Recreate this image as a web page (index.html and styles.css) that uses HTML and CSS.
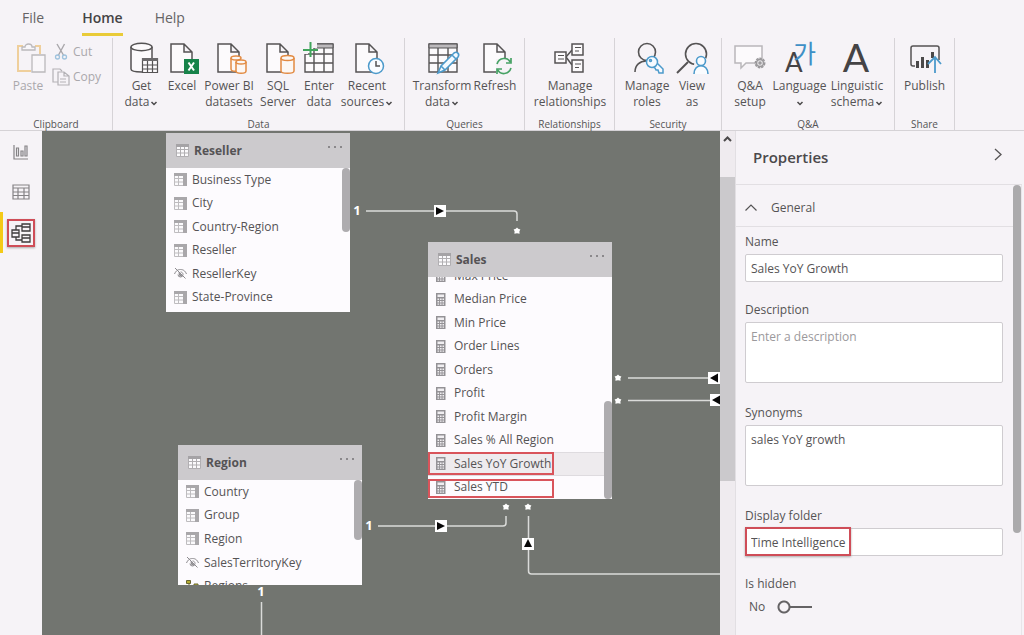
FILE: index.html
```html
<!DOCTYPE html>
<html lang="en">
<head>
<meta charset="utf-8">
<title>Model view</title>
<link rel="stylesheet" href="styles.css">
</head>
<body>
<svg class="symbols" aria-hidden="true">
  <symbol id="table" viewBox="0 0 13 13"><path fill="#fbfafc" stroke="#b1afb2" d="M.5 .5h12v12h-12zM.5 5.500h12M.5 9h12M4.500 3v9.500M8.500 3v9.500"/><path fill="#a5a3a6" d="M0 0h13v3H0z"/></symbol>
  <symbol id="column" viewBox="0 0 13 13"><path fill="#fbfafc" stroke="#bebcbf" d="M.5 .5h12v12h-12zM.5 5.500h9M.5 9h9M4.500 3v9.500"/><path fill="#a9a7aa" d="M0 0h13v3H0zM9 3h4v10H9z"/></symbol>
  <symbol id="calc" viewBox="0 0 13 13"><path fill="#949296" d="M0 0h9.500v13H0z"/><path fill="#f0eef1" d="M1.500 1.500h6.500v2.500H1.500zM1.500 5.500h1.600v1.500H1.500zM4 5.500h1.600v1.500H4zM6.500 5.500H8v1.500H6.500zM1.500 8h1.600v1.500H1.500zM4 8h1.600v1.500H4zM6.500 8H8v1.500H6.500zM1.500 10.400h1.600v1.300H1.500zM4 10.400h1.600v1.300H4zM6.500 10.400H8v1.300H6.500z"/></symbol>
  <symbol id="hidden" viewBox="0 0 13 13"><g fill="none" stroke="#8d8b8f"><path d="M.5 7C2 3.500 4 2.500 6.500 2.500S11 3.500 12.500 7M1 1l10.500 10.500M4 7.500a2.500 2.500 0 0 0 5 0c0-1.500-1-2.500-2.500-2.500"/></g><path fill="#8d8b8f" d="M4.500 5l4 4c-2 1.500-4 0-4-4z"/></symbol>
  <symbol id="page" viewBox="0 0 32 32"><path fill="#fcfafc" stroke="#555354" stroke-width="1.500" d="M5 2h13l8 8v20H5zM18 2v8h8"/></symbol>
  <symbol id="down" viewBox="0 0 8 6"><path fill="none" stroke="#4b494a" stroke-width="1.500" d="M1.500 2L4 4.500 6.500 2"/></symbol>
  <symbol id="star" viewBox="-4 -4 8 8"><path fill="#fff" d="M0-3.500l1.200 1.300 2.200.6-1 1.900.2 2.500L0 2.300l-2.600.5.2-2.500-1-1.900 2.200-.6z"/></symbol>
</svg>
<div class="app">
  <header class="top">
    <nav class="tabs">
      <a href="#file" class="tab">File</a>
      <a href="#home" class="tab tab-active">Home</a>
      <a href="#help" class="tab">Help</a>
    </nav>
    <div class="ribbon">
      <section class="group g-clipboard">
        <div class="tools">
          <button class="tool dim"><svg class="icon" viewBox="0 0 32 32"><path fill="none" stroke="#efcf9c" stroke-width="2" d="M11 4H6v25h13M23 4h5v8"/><path fill="#f9f7fa" stroke="#bbb9bc" stroke-width="1.300" d="M10 8V5h3c0-4 7-4 7 0h3v3zM20 13h13v17H20z"/></svg><span>Paste</span></button>
          <div class="small-tools">
            <button class="small dim"><svg width="18" height="18" viewBox="0 0 18 18" fill="none"><path stroke="#a9a7ab" stroke-width="1.400" d="M5 1l7 12M12.500 1L6 13"/><g stroke="#9fc3de" stroke-width="1.300"><circle cx="5.500" cy="14" r="2"/><circle cx="12.500" cy="14" r="2"/></g></svg><span>Cut</span></button>
            <button class="small dim"><svg width="18" height="18" viewBox="0 0 18 18" fill="none" stroke="#b3b1b5" stroke-width="1.200"><path d="M5.500 14H1V1h7l2 2M6 4h6l5 4v9H6zM12 4v4h5M8 11h6M8 14h6"/></svg><span>Copy</span></button>
          </div>
        </div>
        <h2 class="caption">Clipboard</h2>
      </section>
      <section class="group g-data">
        <div class="tools">
          <button class="tool"><svg class="icon" viewBox="0 0 32 32"><g fill="#fcfafc" stroke="#555354" stroke-width="1.500"><path d="M5 5v22c0 4 21 4 21 0V5"/><ellipse cx="15.500" cy="5" rx="10.500" ry="3.700"/><path stroke-width="1.200" d="M16.500 16.500h15v14h-15zM16.500 23h15M16.500 27h15M21.500 19v11.500M26.500 19v11.500"/></g><path fill="#6b696b" d="M16 16h16v3H16z"/></svg><span>Get<br>data<svg class="down"><use href="#down"/></svg></span></button>
          <button class="tool"><svg class="icon" viewBox="0 0 32 32"><use href="#page" width="32" height="32"/><path fill="#17834a" d="M18 17h15v15H18z"/><path stroke="#fff" stroke-width="2" d="M22.500 20.500l5.500 8M28 20.500l-5.500 8"/></svg><span>Excel</span></button>
          <button class="tool"><svg class="icon" viewBox="0 0 32 32"><use href="#page" width="32" height="32"/><g fill="#fcf7f4" stroke="#e28a42" stroke-width="1.500"><path d="M18 16v11c0 3 9 3 9 0V16"/><ellipse cx="23" cy="16" rx="5" ry="2"/><path d="M23 20v9c0 3 10 3 10 0v-9"/><ellipse cx="28" cy="20" rx="5" ry="2"/></g></svg><span>Power BI<br>datasets</span></button>
          <button class="tool"><svg class="icon" viewBox="0 0 32 32"><use href="#page" width="32" height="32"/><g fill="#fcf7f4" stroke="#e28a42" stroke-width="1.500"><path d="M19 16v13c0 3 13 3 13 0V16"/><ellipse cx="25.500" cy="16" rx="6.500" ry="2.500"/></g></svg><span>SQL<br>Server</span></button>
          <button class="tool"><svg class="icon" viewBox="0 0 32 32"><path fill="#fcfafc" stroke="#555354" stroke-width="1.400" d="M2 2h28v28H2zM2 12h28M2 21h28M11 6v24M21 6v24"/><path fill="#bcb9bc" stroke="#555354" d="M11 2h19v4H11z"/><path fill="#f6f3f7" d="M0 0h14v6H0zM0 0h5v12H0z"/><path stroke="#40a45c" stroke-width="2" d="M0 8h15M7.500 0v15"/></svg><span>Enter<br>data</span></button>
          <button class="tool"><svg class="icon" viewBox="0 0 32 32"><use href="#page" width="32" height="32"/><circle cx="25" cy="24" r="7.500" fill="#fafcff" stroke="#4c9acb" stroke-width="1.500"/><path fill="none" stroke="#555354" stroke-width="1.500" d="M25 19v5h4"/></svg><span>Recent<br>sources<svg class="down"><use href="#down"/></svg></span></button>
        </div>
        <h2 class="caption">Data</h2>
      </section>
      <section class="group g-queries">
        <div class="tools">
          <button class="tool"><svg class="icon" viewBox="0 0 32 32"><path fill="#fcfafc" stroke="#555354" stroke-width="1.400" d="M3 2h28v28H3zM3 13h28M3 21h28M12 6v24M22 6v24"/><path fill="#bcb9bc" stroke="#555354" d="M3 2h28v4H3z"/><path fill="#f4faff" stroke="#4c9acb" stroke-width="1.600" d="M12 31l3-7 13-13c3-2 6 1 4 4L19 28zM15 24l4 4M26 13l4 4"/></svg><span>Transform<br>data<svg class="down"><use href="#down"/></svg></span></button>
          <button class="tool"><svg class="icon" viewBox="0 0 32 32"><use href="#page" width="32" height="32"/><path fill="#f6f3f7" d="M17 17h16v15H17z"/><g fill="none" stroke="#47a265" stroke-width="1.700"><path d="M18 22c2-7 11-7 13-2M32 16v5h-5M32 26c-2 7-11 7-13 2M18 32v-5h5"/></g></svg><span>Refresh</span></button>
        </div>
        <h2 class="caption">Queries</h2>
      </section>
      <section class="group g-relations">
        <div class="tools">
          <button class="tool"><svg class="icon" viewBox="0 0 32 32"><g fill="none" stroke="#555354" stroke-width="1.500"><path d="M12 15l6-7M12 15l6 8"/><path fill="#fcfafc" d="M1 10h11v11H1zM18 2h11v11H18zM18 18h11v12H18z"/><path stroke-width="1" d="M4 13.500h6M4 17h6M21 5.500h6M21 9h4M21 22h6M21 25.500h4"/></g></svg><span>Manage<br>relationships</span></button>
        </div>
        <h2 class="caption">Relationships</h2>
      </section>
      <section class="group g-security">
        <div class="tools">
          <button class="tool"><svg class="icon" viewBox="0 0 32 32"><g fill="none" stroke="#555354" stroke-width="1.600"><circle cx="16" cy="10" r="8.500"/><path d="M4 30c0-7 5-11 11-11"/></g><g fill="#f6faff" stroke="#4c9acb" stroke-width="1.500"><path d="M22 25l2 1 1 2 2 0 1 3h4v-4l-6-6"/><circle cx="21" cy="20" r="5.500"/><circle cx="19.500" cy="18.500" r="1"/></g></svg><span>Manage<br>roles</span></button>
          <button class="tool"><svg class="icon" viewBox="0 0 32 32"><g fill="none" stroke="#555354" stroke-width="1.600"><circle cx="20" cy="12" r="10.500"/><path stroke-width="2" d="M12 20L1 31"/></g><path fill="#f6f3f7" d="M18 24c0-12 14-14 14 0v8H18z"/><g fill="#fafcff" stroke="#4c9acb" stroke-width="1.600"><path d="M18 32c0-11 14-11 14 0"/><circle cx="25" cy="19" r="4.500"/></g></svg><span>View<br>as</span></button>
        </div>
        <h2 class="caption">Security</h2>
      </section>
      <section class="group g-qa">
        <div class="tools">
          <button class="tool"><svg class="icon" viewBox="0 0 32 32"><path fill="#fcfafc" stroke="#b9b7ba" stroke-width="1.500" d="M1 4h27v17H12l-5 5v-5H1z"/><g fill="#e9e7ea" stroke="#9a989b" stroke-width="1.500"><circle cx="26" cy="21" r="4.700" stroke-dasharray="2.500 1"/><circle cx="26" cy="21" r="3.500"/><circle cx="26" cy="21" r="1"/></g></svg><span>Q&amp;A<br>setup</span></button>
          <button class="tool"><svg class="icon" viewBox="0 0 32 32"><text x="1" y="30" class="glyph-a-small">A</text><text x="9" y="21" class="glyph-ko">가</text></svg><span>Language<br><svg class="down"><use href="#down"/></svg></span></button>
          <button class="tool"><svg class="icon" viewBox="0 0 32 32"><text x="15" y="30" class="glyph-a">A</text></svg><span>Linguistic<br>schema<svg class="down"><use href="#down"/></svg></span></button>
        </div>
        <h2 class="caption">Q&amp;A</h2>
      </section>
      <section class="group g-share">
        <div class="tools">
          <button class="tool"><svg class="icon" viewBox="0 0 32 32"><path fill="none" stroke="#555354" stroke-width="1.500" d="M6 24H4c-1 0-2-1-2-2V6c0-1 1-2 2-2h24c1 0 2 1 2 2v12"/><path fill="#4b494a" d="M7 19h3v7H7zM12 15h3v11h-3zM17 18h3v8h-3zM22 10h3v6h-3z"/><path fill="none" stroke="#4c9acb" stroke-width="1.800" d="M26 31V15M19 22l7-7 6 7"/></svg><span>Publish</span></button>
        </div>
        <h2 class="caption">Share</h2>
      </section>
    </div>
  </header>
  <div class="workspace">
    <nav class="rail">
      <button class="view" aria-label="Report view"><svg width="16" height="16" viewBox="0 0 16 16" fill="none" stroke="#858386" stroke-width="1.200"><path d="M1 1v14h14M3.500 4v8h2V4zM8 7v5h2V7zM12 2v10h2V2z"/></svg></button>
      <button class="view" aria-label="Data view"><svg width="18" height="16" viewBox="0 0 18 16" fill="none" stroke="#858386" stroke-width="1.200"><path d="M1 1h16v14H1zM1 4h16M1 8h16M1 11.500h16M6 4v11M12 4v11"/></svg></button>
      <button class="view view-active" aria-label="Model view"><span class="marked"><svg width="20" height="20" viewBox="0 0 20 20" fill="none" stroke="#3d3b3c" stroke-width="1.300"><path d="M1 7h7v7H1zM1 10h7M11 1h8v7h-8zM11 4h8M11 12h8v7h-8zM11 15h8M5 7V3h6M5 14v3h6"/></svg></span></button>
    </nav>
    <main class="canvas">
      <svg class="links" width="678" height="504" viewBox="42 131 678 504">
        <g class="wires">
          <path d="M366 211h148q3 0 3 3v7"/>
          <path d="M628 378h92M628 400.500h92"/>
          <path d="M378 526h125q3 0 3-3v-7"/>
          <path d="M528.500 516v55q0 3 3 3h189"/>
          <path d="M261.500 602v34"/>
        </g>
        <g fill="#fff"><path d="M434 205h12v12h-12zM435 520h12v12h-12zM522 538h12v12h-12zM708 372h12v12h-12zM710 394h12v12h-12z"/></g>
        <path fill="#080808" d="M436 207v8l8-4zM437 522v8l8-4zM528 539l-4 8h8zM718 373.500v9l-8-4.500zM720 395.500v9l-8-4.500z"/>
        <g class="ends"><text x="357" y="215">1</text><text x="369" y="530">1</text><text x="261" y="596">1</text></g>
        <use href="#star" x="513" y="227" width="8" height="8"/><use href="#star" x="614" y="374" width="8" height="8"/><use href="#star" x="614" y="397" width="8" height="8"/><use href="#star" x="502" y="503" width="8" height="8"/><use href="#star" x="524" y="503" width="8" height="8"/>
      </svg>
      <article class="card reseller">
        <header class="card-head"><svg class="mini"><use href="#table"/></svg><h3>Reseller</h3><button class="more" aria-label="More options"></button></header>
        <div class="card-body">
          <ul class="fields">
            <li><svg class="mini"><use href="#column"/></svg>Business Type</li>
            <li><svg class="mini"><use href="#column"/></svg>City</li>
            <li><svg class="mini"><use href="#column"/></svg>Country-Region</li>
            <li><svg class="mini"><use href="#column"/></svg>Reseller</li>
            <li><svg class="mini"><use href="#hidden"/></svg>ResellerKey</li>
            <li><svg class="mini"><use href="#column"/></svg>State-Province</li>
          </ul>
          <i class="thumb"></i>
        </div>
      </article>
      <article class="card sales">
        <header class="card-head"><svg class="mini"><use href="#table"/></svg><h3>Sales</h3><button class="more" aria-label="More options"></button></header>
        <div class="card-body">
          <ul class="fields">
            <li><svg class="mini"><use href="#calc"/></svg>Max Price</li>
            <li><svg class="mini"><use href="#calc"/></svg>Median Price</li>
            <li><svg class="mini"><use href="#calc"/></svg>Min Price</li>
            <li><svg class="mini"><use href="#calc"/></svg>Order Lines</li>
            <li><svg class="mini"><use href="#calc"/></svg>Orders</li>
            <li><svg class="mini"><use href="#calc"/></svg>Profit</li>
            <li><svg class="mini"><use href="#calc"/></svg>Profit Margin</li>
            <li><svg class="mini"><use href="#calc"/></svg>Sales % All Region</li>
            <li class="selected boxed"><svg class="mini"><use href="#calc"/></svg>Sales YoY Growth</li>
            <li class="boxed boxed-last"><svg class="mini"><use href="#calc"/></svg>Sales YTD</li>
          </ul>
          <i class="thumb"></i>
        </div>
      </article>
      <article class="card region">
        <header class="card-head"><svg class="mini"><use href="#table"/></svg><h3>Region</h3><button class="more" aria-label="More options"></button></header>
        <div class="card-body">
          <ul class="fields">
            <li><svg class="mini"><use href="#column"/></svg>Country</li>
            <li><svg class="mini"><use href="#column"/></svg>Group</li>
            <li><svg class="mini"><use href="#column"/></svg>Region</li>
            <li><svg class="mini"><use href="#hidden"/></svg>SalesTerritoryKey</li>
            <li><svg class="mini" viewBox="0 0 13 13"><path fill="#b5ad35" stroke="#69662f" d="M.5 .5h4v3h-4zM8 4h4v3H8zM8 9.500h4v3H8z"/><path fill="none" stroke="#69662f" d="M3 4v7h5M3 5.500h5"/></svg>Regions</li>
          </ul>
          <i class="thumb"></i>
        </div>
      </article>
    </main>
    <div class="scrollbar"><svg width="9" height="6" viewBox="0 0 9 6"><path fill="none" stroke="#4b494a" stroke-width="2" d="M1 5l3.500-3.500L8 5"/></svg><i class="scroll-thumb"></i></div>
    <aside class="props">
      <header class="props-head"><h2>Properties</h2><button aria-label="Collapse pane"><svg width="8" height="13" viewBox="0 0 8 13"><path fill="none" stroke="#555354" stroke-width="1.300" d="M1 1l6 5.500L1 12"/></svg></button></header>
      <div class="props-scroll">
        <div class="props-main">
          <button class="section-head"><svg width="12" height="7" viewBox="0 0 12 7"><path fill="none" stroke="#555354" stroke-width="1.200" d="M.5 6.500L6 1l5.500 5.500"/></svg>General</button>
          <form class="form">
            <div class="field"><label for="name">Name</label><input id="name" type="text" value="Sales YoY Growth"></div>
            <div class="field field-area"><label for="desc">Description</label><textarea id="desc" placeholder="Enter a description"></textarea></div>
            <div class="field field-area"><label for="syn">Synonyms</label><textarea id="syn">sales YoY growth</textarea></div>
            <div class="field field-marked"><label for="folder">Display folder</label><input id="folder" type="text" value="Time Intelligence"></div>
            <div class="field"><label for="hide">Is hidden</label><div class="switch-row"><span>No</span><input id="hide" class="switch" type="checkbox" role="switch"></div></div>
          </form>
        </div>
        <i class="props-thumb"></i>
      </div>
    </aside>
  </div>
</div>
</body>
</html>
```
FILE: styles.css
```css
*, *::after { box-sizing: border-box; }
body { margin: 0; font: 12px/16px "Open Sans", "Noto Sans", sans-serif; color: #555355; background: #f6f3f7; }
h2, h3, ul { margin: 0; padding: 0; list-style: none; }
button { font: inherit; color: inherit; background: none; border: 0; padding: 0; }
.symbols { position: absolute; width: 0; height: 0; }
.app { display: flex; flex-direction: column; min-height: 100vh; }

/* Tabs and ribbon */
.top { border-bottom: 1px solid #d5d2d6; }
.tabs { display: flex; gap: 32px; height: 38px; padding: 8px 22px 0; }
.tab { height: 28px; font-size: 14px; line-height: 20px; color: #656365; text-decoration: none; }
.tab-active { margin-left: 6px; color: #454345; font-weight: 600; border-bottom: 3px solid #e9cb38; }
.ribbon { display: flex; height: 92px; }
.group { display: flex; flex-direction: column; justify-content: space-between; border-right: 1px solid #d6d3d7; padding-top: 2px; }
.tools { display: grid; grid-auto-flow: column; justify-content: start; align-items: start; }
.caption { font-size: 10px; font-weight: 400; line-height: 12px; text-align: center; }
.tool { display: flex; flex-direction: column; align-items: center; gap: 4px; padding-top: 2px; text-align: center; white-space: nowrap; }
.tool > span { display: flow-root; margin: 0 -8px; }
.icon { width: 32px; height: 32px; overflow: visible; }
.down { width: 8px; height: 6px; margin-left: 1px; }
.dim { color: #aaa8ac; }
.small-tools { display: grid; gap: 7px; padding: 3px 0 0 4px; }
.small { display: flex; align-items: center; gap: 3px; }
.g-clipboard { width: 113px; padding-left: 8px; }
.g-clipboard .caption { padding-right: 8px; }
.g-clipboard .tools { grid-template-columns: 40px 60px; }
.g-data .tools { grid-template-columns: 41px 40px 54px 44px 38px 58px; padding: 0 8px; }
.g-queries .tools { grid-template-columns: 58px 48px; padding: 0 5px 0 8px; }
.g-relations .tools { grid-template-columns: 80px; padding: 0 4px 0 5px; }
.g-security .tools { grid-template-columns: 50px 40px; padding: 0 9px 0 7px; }
.g-qa .tools { grid-template-columns: 42px 57px 58px; padding: 0 8px 0 7px; }
.g-share .tools { grid-template-columns: 59px; }
.glyph-a { font: 39px "Lato", sans-serif; text-anchor: middle; fill: #454345; }
.glyph-a-small { font: 26px "Lato", sans-serif; fill: #454345; }
.glyph-ko { font: 25px "Noto Sans CJK KR", sans-serif; fill: #3f90c6; }

/* Workspace */
.workspace { display: flex; flex: 1; }
.rail { width: 42px; display: flex; flex-direction: column; padding-top: 1px; }
.view { height: 40px; display: grid; place-items: center; border-left: 3px solid transparent; border-right: 3px solid transparent; }
.view-active { height: 41px; border-left-color: #f4ca17; }
.marked { display: grid; place-items: center; width: 28px; height: 28px; border: 2px solid #cf4d58; box-shadow: 0 1px 2px #aaa; }
.canvas { position: relative; flex: 1; min-width: 0; overflow: hidden; background: #727570; }
.links { display: block; }
.wires { fill: none; stroke: #dadbd9; stroke-width: 1.5; }
.ends { fill: #fff; font-size: 13px; font-weight: 700; text-anchor: middle; }
.card { position: absolute; width: 184px; display: flex; flex-direction: column; background: #fdfbfe; overflow: hidden; }
.reseller { left: 124px; top: 2px; height: 179px; }
.sales { left: 386px; top: 111px; height: 257px; }
.region { left: 136px; top: 314px; height: 140px; }
.card-head { flex: none; height: 35px; display: flex; align-items: center; gap: 5px; padding: 0 7px 0 10px; background: #cccacd; }
.card-head h3 { flex: 1; font-size: 12px; font-weight: 700; }
.mini { width: 13px; height: 13px; flex: none; }
.more { width: 16px; height: 16px; background: radial-gradient(circle at 2px 4px, #8a888b 1px, transparent 1.5px) 0 0 / 6px 16px repeat-x; }
.card-body { position: relative; flex: 1; min-height: 0; overflow: hidden; display: flex; flex-direction: column; }
.fields { flex: none; display: grid; grid-auto-rows: 1fr; height: 141px; }
.fields li { position: relative; display: flex; align-items: center; gap: 5px; padding-left: 8px; }
.sales .card-body { justify-content: flex-end; }
.sales .fields { height: 235px; }
.region .fields { height: 118px; }
.selected { background: #eeebee; box-shadow: inset 0 0 0 1px #dedbdf; }
.boxed::after { content: ""; position: absolute; left: 0; top: 0; width: 126px; height: 23px; border: 2px solid #d9545b; }
.boxed-last::after { top: 3px; height: 19px; }
.thumb { position: absolute; right: 0; top: 0; width: 8px; height: 64px; border-radius: 4px; background: #aeacaf; }
.sales .thumb { top: auto; bottom: 0; height: 98px; }
.region .thumb { height: 60px; }
.scrollbar { width: 16px; padding-top: 5px; display: flex; flex-direction: column; align-items: center; gap: 35px; background: #efebef; border-right: 1px solid #e2dfe3; }
.scroll-thumb { width: 15px; height: 304px; background: #cbc9cc; }

/* Properties pane */
.props { width: 288px; padding-right: 2px; display: flex; flex-direction: column; }
.props-head { height: 54px; display: flex; align-items: center; justify-content: space-between; padding: 0 20px 2px 17px; border-bottom: 1px solid #e2dfe3; }
.props-head h2 { font-size: 15px; line-height: 20px; font-weight: 600; color: #4b494b; }
.props-scroll { flex: 1; display: flex; align-items: flex-start; border-right: 1px solid #e8e5e9; }
.props-main { flex: 1; }
.section-head { width: 100%; height: 42px; display: flex; align-items: center; gap: 14px; padding: 4px 9px 0; border-bottom: 1px solid #e2dfe3; }
.form { display: grid; gap: 18px; padding: 5px 10px 0 9px; }
.field { position: relative; display: grid; gap: 2px; }
.field-area { padding-bottom: 2px; }
.field label { line-height: 20px; }
.field input[type="text"], .field textarea { width: 100%; height: 28px; padding: 0 5px; font: inherit; color: inherit; background: #fff; border: 1px solid #cfccd0; border-radius: 2px; }
.field textarea { display: block; height: 61px; padding-top: 6px; resize: none; }
.field textarea::placeholder { color: #9b999c; opacity: 1; }
.field-marked::after { content: ""; position: absolute; left: 0; bottom: 0; width: 106px; height: 29px; border: 2px solid #cf4d58; box-shadow: 0 1px 2px #aaa; }
.switch-row { display: flex; align-items: center; gap: 12px; padding: 3px 4px; }
.switch { appearance: none; margin: 0; width: 35px; height: 14px; background: radial-gradient(circle at 7px 7px, #f6f3f7 4px, #656365 5px, #656365 6px, transparent 7px) no-repeat, linear-gradient(#656365, #656365) 13px 6px / 22px 2px no-repeat; }
.props-thumb { width: 8px; height: 348px; border-radius: 4px; background: #abaaac; }
```
